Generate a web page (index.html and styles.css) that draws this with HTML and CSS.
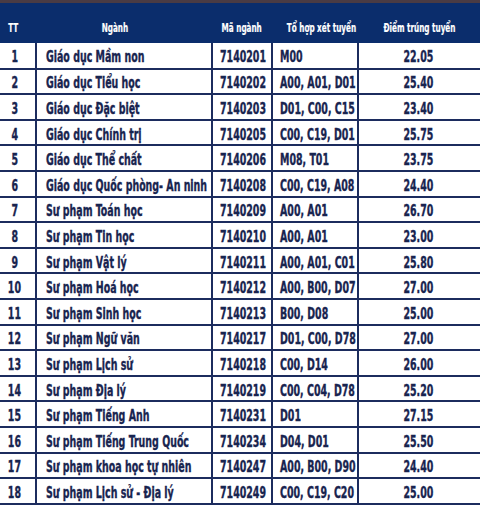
FILE: index.html
```html
<!DOCTYPE html>
<html lang="vi">
<head>
<meta charset="utf-8">
<link rel="stylesheet" href="styles.css">
</head>
<body>
<div class="strip"></div>
<table class="scores">
<colgroup>
<col class="c-tt"><col class="c-name"><col class="c-code"><col class="c-combo"><col class="c-score">
</colgroup>
<thead>
<tr><th class="tt"><span class="t">TT</span></th><th class="hname"><span class="t">Ngành</span></th><th><span class="t">Mã ngành</span></th><th><span class="t">Tổ hợp xét tuyển</span></th><th><span class="t">Điểm trúng tuyển</span></th></tr>
</thead>
<tbody>
<tr><td class="tt"><span class="t">1</span></td><td class="name"><span class="t">Giáo dục Mầm non</span></td><td><span class="t">7140201</span></td><td><span class="t">M00</span></td><td class="score"><span class="t">22.05</span></td></tr>
<tr><td class="tt"><span class="t">2</span></td><td class="name"><span class="t">Giáo dục Tiểu học</span></td><td><span class="t">7140202</span></td><td><span class="t">A00, A01, D01</span></td><td class="score"><span class="t">25.40</span></td></tr>
<tr><td class="tt"><span class="t">3</span></td><td class="name"><span class="t">Giáo dục Đặc biệt</span></td><td><span class="t">7140203</span></td><td><span class="t">D01, C00, C15</span></td><td class="score"><span class="t">23.40</span></td></tr>
<tr><td class="tt"><span class="t">4</span></td><td class="name"><span class="t">Giáo dục Chính trị</span></td><td><span class="t">7140205</span></td><td><span class="t">C00, C19, D01</span></td><td class="score"><span class="t">25.75</span></td></tr>
<tr><td class="tt"><span class="t">5</span></td><td class="name"><span class="t">Giáo dục Thể chất</span></td><td><span class="t">7140206</span></td><td><span class="t">M08, T01</span></td><td class="score"><span class="t">23.75</span></td></tr>
<tr><td class="tt"><span class="t">6</span></td><td class="name"><span class="t">Giáo dục Quốc phòng- An ninh</span></td><td><span class="t">7140208</span></td><td><span class="t">C00, C19, A08</span></td><td class="score"><span class="t">24.40</span></td></tr>
<tr><td class="tt"><span class="t">7</span></td><td class="name"><span class="t">Sư phạm Toán học</span></td><td><span class="t">7140209</span></td><td><span class="t">A00, A01</span></td><td class="score"><span class="t">26.70</span></td></tr>
<tr><td class="tt"><span class="t">8</span></td><td class="name"><span class="t">Sư phạm Tin học</span></td><td><span class="t">7140210</span></td><td><span class="t">A00, A01</span></td><td class="score"><span class="t">23.00</span></td></tr>
<tr><td class="tt"><span class="t">9</span></td><td class="name"><span class="t">Sư phạm Vật lý</span></td><td><span class="t">7140211</span></td><td><span class="t">A00, A01, C01</span></td><td class="score"><span class="t">25.80</span></td></tr>
<tr><td class="tt"><span class="t">10</span></td><td class="name"><span class="t">Sư phạm Hoá học</span></td><td><span class="t">7140212</span></td><td><span class="t">A00, B00, D07</span></td><td class="score"><span class="t">27.00</span></td></tr>
<tr><td class="tt"><span class="t">11</span></td><td class="name"><span class="t">Sư phạm Sinh học</span></td><td><span class="t">7140213</span></td><td><span class="t">B00, D08</span></td><td class="score"><span class="t">25.00</span></td></tr>
<tr><td class="tt"><span class="t">12</span></td><td class="name"><span class="t">Sư phạm Ngữ văn</span></td><td><span class="t">7140217</span></td><td><span class="t">D01, C00, D78</span></td><td class="score"><span class="t">27.00</span></td></tr>
<tr><td class="tt"><span class="t">13</span></td><td class="name"><span class="t">Sư phạm Lịch sử</span></td><td><span class="t">7140218</span></td><td><span class="t">C00, D14</span></td><td class="score"><span class="t">26.00</span></td></tr>
<tr><td class="tt"><span class="t">14</span></td><td class="name"><span class="t">Sư phạm Địa lý</span></td><td><span class="t">7140219</span></td><td><span class="t">C00, C04, D78</span></td><td class="score"><span class="t">25.20</span></td></tr>
<tr><td class="tt"><span class="t">15</span></td><td class="name"><span class="t">Sư phạm Tiếng Anh</span></td><td><span class="t">7140231</span></td><td><span class="t">D01</span></td><td class="score"><span class="t">27.15</span></td></tr>
<tr><td class="tt"><span class="t">16</span></td><td class="name"><span class="t">Sư phạm Tiếng Trung Quốc</span></td><td><span class="t">7140234</span></td><td><span class="t">D04, D01</span></td><td class="score"><span class="t">25.50</span></td></tr>
<tr><td class="tt"><span class="t">17</span></td><td class="name"><span class="t">Sư phạm khoa học tự nhiên</span></td><td><span class="t">7140247</span></td><td><span class="t">A00, B00, D90</span></td><td class="score"><span class="t">24.40</span></td></tr>
<tr><td class="tt"><span class="t">18</span></td><td class="name"><span class="t">Sư phạm Lịch sử - Địa lý</span></td><td><span class="t">7140249</span></td><td><span class="t">C00, C19, C20</span></td><td class="score"><span class="t">25.00</span></td></tr>
</tbody>
</table>
</body>
</html>
```

FILE: styles.css
```css
html, body {
  margin: 0;
  padding: 0;
  background: #ffffff;
}
body {
  width: 480px;
  height: 505px;
  overflow: hidden;
  font-family: "DejaVu Sans Condensed", "DejaVu Sans", sans-serif;
  font-weight: bold;
  color: #18244f;
}
.strip {
  height: 3px;
  background: #4a3b44;
}
.scores {
  width: 480px;
  border-collapse: collapse;
  table-layout: fixed;
}
.c-tt { width: 36px; }
.c-name { width: 176px; }
.c-code { width: 60px; }
.c-combo { width: 86px; }
.c-score { width: 122px; }

.t {
  display: inline-block;
  transform: scaleX(0.7);
  transform-origin: left center;
  -webkit-text-stroke: 0.35px currentColor;
}

.scores th {
  height: 40px;
  padding: 9px 0 0 0;
  background: #0b2d6c;
  color: #ffffff;
  font-size: 11.5px;
  font-weight: bold;
  text-align: center;
  white-space: nowrap;
  box-sizing: border-box;
}
.scores th .t {
  transform-origin: center center;
  -webkit-text-stroke: 0.2px currentColor;
}
.scores th.hname { padding-right: 18px; }
.scores th.tt { padding-right: 10px; }

.scores td {
  height: 25.6px;
  padding: 5px 0 0 7px;
  box-sizing: border-box;
  border: 2px solid #1c2c5e;
  font-size: 15px;
  white-space: nowrap;
  line-height: 1;
}
.scores tr td:first-child { border-left: none; }
.scores tr td:last-child { border-right: none; }
.scores tbody tr:first-child td { border-top: none; }

.scores td.tt {
  text-align: center;
  padding-left: 0;
  padding-right: 6px;
}
.scores td.tt .t,
.scores td.score .t {
  transform-origin: center center;
}
.scores td.name { padding-left: 9px; }
.scores td.score {
  text-align: center;
  padding-left: 0;
  padding-right: 2px;
}
```
